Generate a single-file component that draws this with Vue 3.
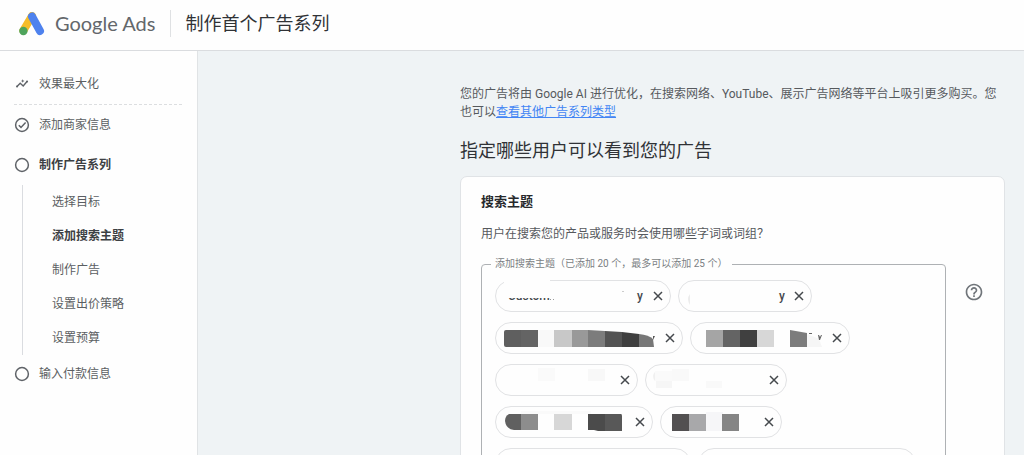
<script setup>
const subSteps = [
  { label: '选择目标', active: false },
  { label: '添加搜索主题', active: true },
  { label: '制作广告', active: false },
  { label: '设置出价策略', active: false },
  { label: '设置预算', active: false },
]

// Shapes are listed as [x, y, width, height, fill] inside each chip.
const chips = [
  {
    width: 150,
    texts: [
      { x: 12, y: 19, value: 'Custom' },
      { x: 141, y: 19, value: 'y' },
    ],
    blocks: [[8, -2, 46, 18, '#fefefe'], [12, 8, 54, 9, '#fefefe']],
    paths: [{ d: 'M54 18h1v1h-1zM57 18h1v1h-1z', fill: '#9a9a9a' }, { d: 'M126 10h2v1h-2z', fill: '#ccc' }],
  },
  {
    width: 108,
    texts: [{ x: 100, y: 19, value: 'y' }],
    blocks: [],
    paths: [{ d: 'M11 13q-4 5 0 11z', fill: '#ececec' }],
  },
  {
    width: 162,
    texts: [],
    blocks: [[42, 7, 17, 17, '#f9f9f9'], [58, 7, 18, 17, '#c8c8c8']],
    paths: [
      { d: 'M10 7h15v17H10q-2 0-2-2V9q0-2 2-2z', fill: '#5f5f5f' },
      { d: 'M25 7h17v17H25z', fill: '#646464' },
      { d: 'M76 7h16v17H76z', fill: '#999' },
      { d: 'M92 7l17 1v16H92z', fill: '#7c7c7c' },
      { d: 'M109 8l17 1v15h-17z', fill: '#535353' },
      { d: 'M126 9l17 2v13h-17z', fill: '#3f3f3f' },
      { d: 'M143 11q10 1 14 5l1 8h-15z', fill: '#777' },
      { d: 'M157 13l2 0-2 4z', fill: '#555' },
    ],
  },
  {
    width: 134,
    texts: [],
    blocks: [
      [15, 7, 17, 17, '#a5a5a5'],
      [32, 7, 17, 17, '#646464'],
      [49, 7, 17, 17, '#404040'],
      [66, 7, 17, 17, '#d7d7d7'],
    ],
    paths: [
      { d: 'M99 7l17 3v14H99z', fill: '#7c7c7c' },
      { d: 'M116 11l12 5 3 8h-15z', fill: '#f6f6f6' },
      { d: 'M118 10h3v1h-3zM127 12h1l1 2 1-2h1l-2 5h-1z', fill: '#666' },
    ],
  },
  {
    width: 117,
    texts: [],
    blocks: [[42, 3, 17, 13, '#fafafa'], [92, 4, 17, 12, '#f8f8f8']],
    paths: [],
  },
  {
    width: 116,
    texts: [],
    blocks: [[9, 6, 17, 10, '#fafafa'], [26, 4, 17, 12, '#f9f9f9'], [10, 16, 16, 7, '#f6f6f6'], [60, 16, 16, 7, '#f9f9f9']],
    paths: [{ d: 'M9 7q-4 4 0 9z', fill: '#f0f0f0' }],
  },
  {
    width: 132,
    texts: [],
    blocks: [
      [25, 7, 17, 16, '#8d8d8d'],
      [58, 7, 18, 16, '#d7d7d7'],
    ],
    paths: [
      { d: 'M25 4h70v3H25z', fill: '#fafafa' },
      { d: 'M25 7H13q-4 2-4 7 1 8 9 9h7z', fill: '#606060' },
      { d: 'M92 7h17v17h-7l-4-1h-6z', fill: '#4b4b4b' },
      { d: 'M109 7h16q1 0 1 2v15h-17z', fill: '#585858' },
    ],
  },
  {
    width: 96,
    texts: [],
    blocks: [
      [11, 7, 17, 17, '#525051'],
      [28, 7, 17, 17, '#a8a8aa'],
      [45, 5, 17, 19, '#f6f6f8'],
      [61, 7, 17, 17, '#858585'],
    ],
    paths: [],
  },
  { width: 170, texts: [], blocks: [], paths: [] },
  { width: 192, texts: [], blocks: [], paths: [] },
]
</script>

<template>
  <div class="page">
    <header class="topbar">
      <svg class="logo" width="26" height="24" viewBox="0 0 26 24" aria-hidden="true">
        <path d="M13 4 4.400 18.500" stroke="#f5bd2a" stroke-width="8" stroke-linecap="round" />
        <path d="M13 4.500 21 19" stroke="#4e82ee" stroke-width="8" stroke-linecap="round" />
        <circle cx="4.400" cy="19" r="4.200" fill="#4ea45c" />
      </svg>
      <span class="brand">Google Ads</span>
      <h1 class="page-title">制作首个广告系列</h1>
    </header>

    <div class="body">
      <nav class="sidebar" aria-label="步骤">
        <a href="#goal" class="step campaign">
          <svg width="16" height="16" viewBox="0 0 16 16" fill="none" stroke="#5f6368" aria-hidden="true">
            <path d="M3 10.500 6.200 7.200 9.200 10 13 5.500" stroke-width="1.400" />
            <path d="M3 10.500h.1M13 5.500h.1" stroke-width="2" stroke-linecap="round" />
            <path d="m8.700 3.300.6 1.100 1.200.6-1.200.6-.6 1.100-.6-1.100L6.900 5l1.200-.6z" fill="#5f6368" stroke="none" />
          </svg>
          <span>效果最大化</span>
        </a>
        <a href="#business" class="step">
          <svg width="16" height="16" viewBox="0 0 16 16" fill="none" stroke="#5f6368" stroke-width="1.500" aria-hidden="true">
            <circle cx="8" cy="8" r="6.400" />
            <path d="m4.800 8.200 2.200 2.200 4.600-4.800" />
          </svg>
          <span>添加商家信息</span>
        </a>
        <a href="#create" class="step strong">
          <svg width="16" height="16" viewBox="0 0 16 16" fill="none" stroke="#5f6368" stroke-width="1.500" aria-hidden="true">
            <circle cx="8" cy="8" r="6.400" />
          </svg>
          <span>制作广告系列</span>
        </a>
        <ul class="substeps">
          <li v-for="step in subSteps" :key="step.label">
            <a href="#step" :class="{ strong: step.active }">{{ step.label }}</a>
          </li>
        </ul>
        <a href="#payment" class="step last">
          <svg width="16" height="16" viewBox="0 0 16 16" fill="none" stroke="#5f6368" stroke-width="1.500" aria-hidden="true">
            <circle cx="8" cy="8" r="6.400" />
          </svg>
          <span>输入付款信息</span>
        </a>
      </nav>

      <main class="content">
        <p class="intro">您的广告将由 Google AI 进行优化，在搜索网络、YouTube、展示广告网络等平台上吸引更多购买。您也可以<a href="#types">查看其他广告系列类型</a></p>
        <h2 class="heading">指定哪些用户可以看到您的广告</h2>
        <section class="card">
          <h3 class="card-title">搜索主题</h3>
          <p class="question">用户在搜索您的产品或服务时会使用哪些字词或词组？</p>
          <div class="field-row">
            <fieldset class="themes">
              <legend>添加搜索主题（已添加 20 个，最多可以添加 25 个）</legend>
              <div class="chips">
                <div v-for="(chip, i) in chips" :key="i" class="chip">
                  <svg class="chip-art" :width="chip.width" height="30" aria-hidden="true">
                    <text v-for="t in chip.texts" :key="t.value" :x="t.x" :y="t.y">{{ t.value }}</text>
                    <rect v-for="(b, n) in chip.blocks" :key="n" :x="b[0]" :y="b[1]" :width="b[2]" :height="b[3]" :fill="b[4]" />
                    <path v-for="p in chip.paths" :key="p.d" :d="p.d" :fill="p.fill" />
                  </svg>
                  <button type="button" class="remove" aria-label="移除">
                    <svg width="10" height="10" viewBox="0 0 10 10" fill="none" stroke="#45494d" stroke-width="1.500" aria-hidden="true">
                      <path d="m1 1 8 8M9 1 1 9" />
                    </svg>
                  </button>
                </div>
              </div>
            </fieldset>
            <button type="button" class="help" aria-label="帮助">
              <svg width="20" height="20" viewBox="0 0 24 24" fill="#70757a" aria-hidden="true">
                <path d="M11 18h2v-2h-2v2zm1-16C6.480 2 2 6.480 2 12s4.480 10 10 10 10-4.480 10-10S17.520 2 12 2zm0 18c-4.410 0-8-3.590-8-8s3.590-8 8-8 8 3.590 8 8-3.590 8-8 8zm0-14c-2.210 0-4 1.790-4 4h2c0-1.100.9-2 2-2s2 .9 2 2c0 2-3 1.750-3 5h2c0-2.250 3-2.500 3-5 0-2.210-1.790-4-4-4z" />
              </svg>
            </button>
          </div>
        </section>
      </main>
    </div>
  </div>
</template>

<style>
body {
  margin: 0;
}
</style>

<style scoped>
.page {
  display: flex;
  flex-direction: column;
  height: 100vh;
  overflow: hidden;
  background: #eff3f5;
  color: #56595d;
  font-family: Roboto, "Noto Sans CJK SC", sans-serif;
  font-size: 12px;
  line-height: 18px;
}

h1,
h2,
h3,
p,
ul {
  margin: 0;
  padding: 0;
}

.topbar {
  display: flex;
  flex: none;
  align-items: center;
  height: 51px;
  padding: 0 19px 3px;
  box-sizing: border-box;
  background: #fefefe;
  border-bottom: 1px solid #dadcdf;
}

.logo {
  flex: none;
  fill: none;
}

.brand {
  margin-left: 10px;
  padding-right: 15px;
  border-right: 1px solid #dfe1e3;
  color: #63676b;
  font-family: Lato, sans-serif;
  font-size: 20px;
  line-height: 27px;
}

.page-title {
  margin-left: 14px;
  color: #303236;
  font-size: 18px;
  font-weight: 400;
  line-height: 26px;
}

.body {
  display: flex;
  flex: 1;
  min-height: 0;
}

.sidebar {
  flex: none;
  width: 198px;
  box-sizing: border-box;
  padding: 13px 15px 0 14px;
  background: #fefefe;
  border-right: 1px solid #e0e3e5;
}

.sidebar a {
  color: #5b5e62;
  text-decoration: none;
}

.step {
  display: flex;
  align-items: center;
  gap: 9px;
  height: 40px;
}

.step svg {
  flex: none;
}

.last {
  height: 38px;
}

.campaign {
  border-bottom: 1px dashed #dcdee0;
}

.sidebar .strong {
  color: #3c4043;
  font-weight: 700;
}

.substeps {
  margin-left: 8px;
  padding-left: 29px;
  border-left: 1px solid #dadce0;
  list-style: none;
}

.substeps a {
  display: block;
  line-height: 34px;
}

.content {
  flex: 1;
  min-width: 0;
  padding: 34px 19px 0 262px;
}

.intro a {
  color: #4285f4;
  text-decoration: underline;
}

.heading {
  margin-top: 17px;
  color: #303236;
  font-size: 18px;
  font-weight: 400;
  line-height: 26px;
}

.card {
  margin-top: 12px;
  padding: 15px 20px 0;
  background: #fefefe;
  border: 1px solid #e0e3e6;
  border-radius: 7px;
}

.card-title {
  color: #27292c;
  font-size: 13px;
  font-weight: 700;
  line-height: 20px;
}

.question {
  margin-top: 13px;
}

.field-row {
  display: flex;
  align-items: flex-start;
  margin-top: 13px;
}

.themes {
  flex: 1;
  min-width: 0;
  box-sizing: border-box;
  margin: 0;
  padding: 8px 13px 12px;
  border: 1px solid #aeb1b4;
  border-radius: 4px;
}

.themes legend {
  margin-left: -4px;
  padding: 0 5px 0 4px;
  color: #7b7f83;
  font-size: 10px;
  line-height: 16px;
}

.chips {
  display: flex;
  flex-wrap: wrap;
  gap: 10px 7px;
  padding-right: 10px;
}

.chip {
  display: flex;
  height: 30px;
  border: 1px solid #e1e2e4;
  border-radius: 16px;
}

.chip-art {
  display: block;
  overflow: visible;
  fill: #45494d;
  font-size: 12px;
  font-weight: 500;
}

.remove,
.help {
  display: grid;
  place-items: center;
  padding: 0;
  border: 0;
  background: none;
}

.remove {
  width: 24px;
}

.help {
  flex: none;
  width: 20px;
  height: 20px;
  margin: 26px 0 0 18px;
}
</style>
